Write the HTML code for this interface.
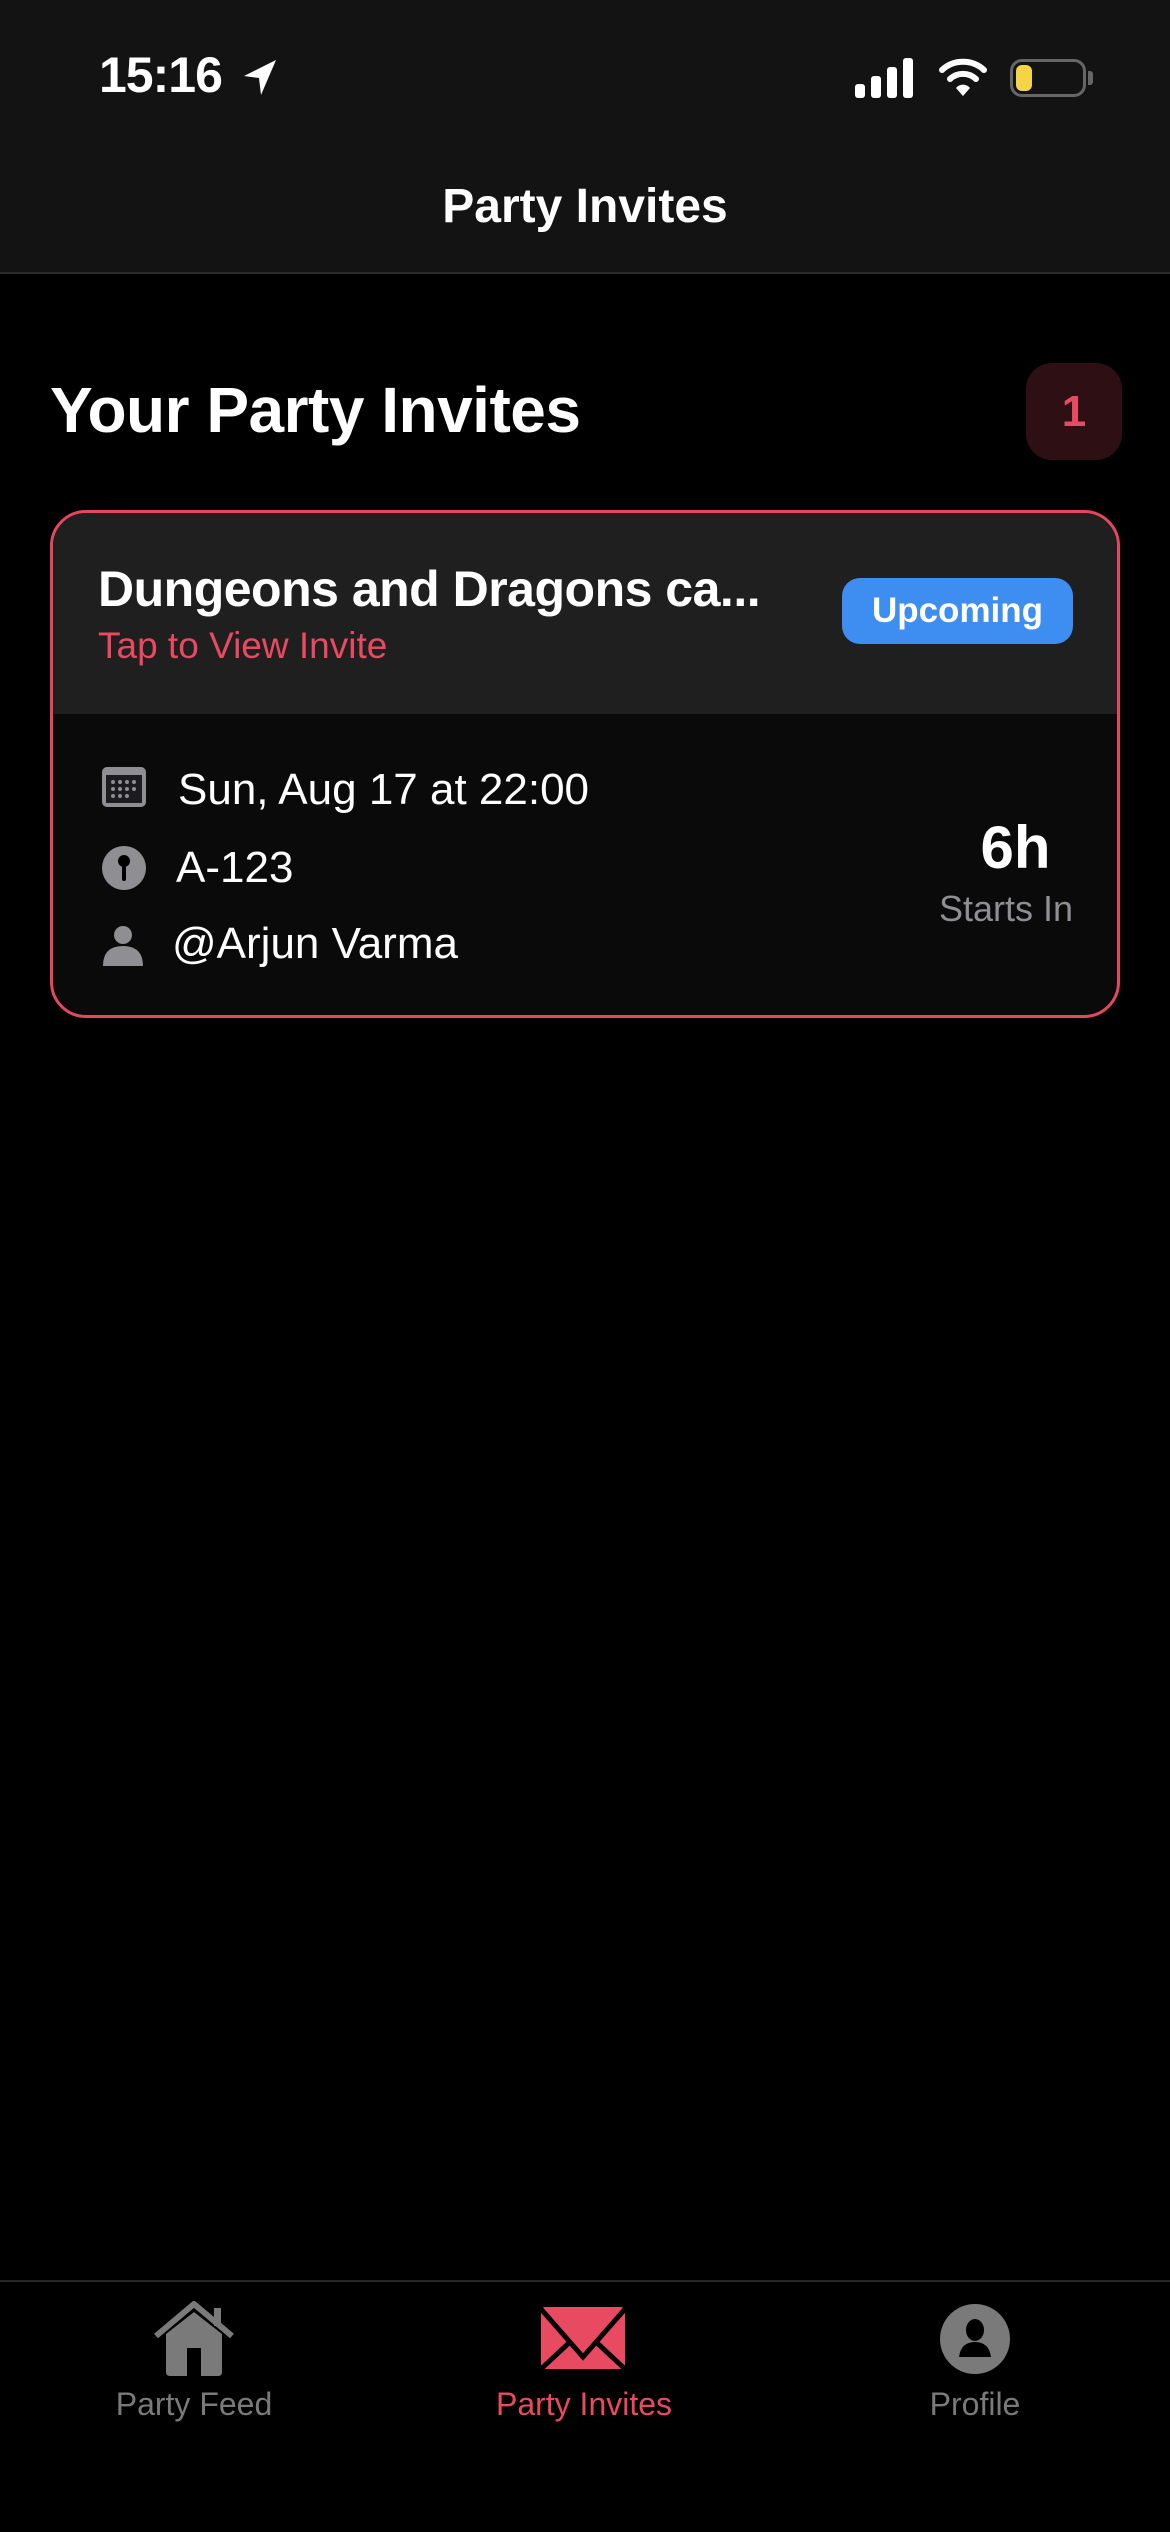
<!DOCTYPE html>
<html><head><meta charset="utf-8"><style>
*{margin:0;padding:0;box-sizing:border-box}
body{width:1170px;height:2532px;background:#000;font-family:"Liberation Sans",sans-serif;color:#fff;position:relative;overflow:hidden}
.abs{position:absolute}
</style></head><body>
<div class="abs" style="left:0;top:0;width:1170px;height:274px;background:#131313;border-bottom:2px solid #2a2a2a"></div>
<div class="abs" style="left:99px;top:46px;font-size:50px;font-weight:700;letter-spacing:-1px">15:16</div>
<svg class="abs" style="left:240px;top:58px" width="40" height="40" viewBox="0 0 40 40"><path d="M36 2 L4 18 L19 20 L21 37 Z" fill="#fff"/></svg>
<svg class="abs" style="left:855px;top:58px" width="60" height="40"><rect x="0" y="26" width="10" height="14" rx="3" fill="#fff"/><rect x="16" y="18" width="10" height="22" rx="3" fill="#fff"/><rect x="32" y="9" width="10" height="31" rx="3" fill="#fff"/><rect x="48" y="0" width="10" height="40" rx="3" fill="#fff"/></svg>
<svg class="abs" style="left:938px;top:56px" width="50" height="42" viewBox="0 0 50 42"><path d="M4 14 A31 31 0 0 1 46 14" stroke="#fff" stroke-width="6" fill="none" stroke-linecap="round"/><path d="M12 23 A19 19 0 0 1 38 23" stroke="#fff" stroke-width="6" fill="none" stroke-linecap="round"/><path d="M18 32 L25 40 L32 32 A9 9 0 0 0 18 32Z" fill="#fff"/></svg>
<div class="abs" style="left:1010px;top:59px;width:76px;height:38px;border:3px solid #666;border-radius:12px"></div>
<div class="abs" style="left:1016px;top:65px;width:16px;height:26px;background:#f5d547;border-radius:6px"></div>
<div class="abs" style="left:1088px;top:71px;width:5px;height:14px;background:#666;border-radius:0 3px 3px 0"></div>
<div class="abs" style="left:0;width:1170px;top:179px;text-align:center;font-size:48px;font-weight:600">Party Invites</div>

<div class="abs" style="left:50px;top:373px;font-size:64px;font-weight:700;letter-spacing:-0.5px">Your Party Invites</div>
<div class="abs" style="left:1026px;top:363px;width:96px;height:97px;background:#2e0f14;border-radius:26px;color:#e84a62;font-size:44px;font-weight:600;text-align:center;line-height:97px">1</div>

<div class="abs" style="left:50px;top:510px;width:1070px;height:508px;border:3px solid #e5475f;border-radius:36px;overflow:hidden;background:#0a0a0a">
 <div style="height:201px;background:#1f1f1f;position:relative">
  <div class="abs" style="left:45px;top:47px;font-size:50px;font-weight:700;letter-spacing:-0.5px">Dungeons and Dragons ca...</div>
  <div class="abs" style="left:45px;top:112px;font-size:37px;color:#e84a62">Tap to View Invite</div>
  <div class="abs" style="left:789px;top:65px;width:231px;height:66px;background:#3d8ef0;border-radius:18px;font-size:35px;font-weight:700;text-align:center;line-height:66px">Upcoming</div>
 </div>
 <svg class="abs" style="left:49px;top:254px" width="44" height="40"><rect x="0" y="0" width="44" height="40" rx="5" fill="#8e8e93"/><rect x="4" y="8" width="36" height="28" fill="#1c1c1e"/><g fill="#8e8e93"><circle cx="11" cy="15" r="2"/><circle cx="18" cy="15" r="2"/><circle cx="25" cy="15" r="2"/><circle cx="32" cy="15" r="2"/><circle cx="11" cy="22" r="2"/><circle cx="18" cy="22" r="2"/><circle cx="25" cy="22" r="2"/><circle cx="32" cy="22" r="2"/><circle cx="11" cy="29" r="2"/><circle cx="18" cy="29" r="2"/><circle cx="25" cy="29" r="2"/></g></svg>
 <div class="abs" style="left:125px;top:252px;font-size:44px">Sun, Aug 17 at 22:00</div>
 <svg class="abs" style="left:48px;top:332px" width="46" height="46"><circle cx="23" cy="23" r="22" fill="#8e8e93"/><circle cx="23" cy="16" r="6" fill="#000"/><rect x="21" y="18" width="4" height="18" rx="2" fill="#000"/></svg>
 <div class="abs" style="left:123px;top:330px;font-size:44px">A-123</div>
 <svg class="abs" style="left:50px;top:411px" width="40" height="42"><circle cx="20" cy="11" r="9" fill="#8e8e93"/><path d="M0 42 Q0 22 20 22 Q40 22 40 42Z" fill="#8e8e93"/></svg>
 <div class="abs" style="left:119px;top:406px;font-size:44px">@Arjun Varma</div>
 <div class="abs" style="left:850px;width:225px;top:300px;text-align:center;font-size:60px;font-weight:700">6h</div>
 <div class="abs" style="right:44px;top:375px;font-size:36px;color:#8e8e93">Starts In</div>
</div>

<div class="abs" style="left:0;top:2280px;width:1170px;height:2px;background:#262626"></div>
<svg class="abs" style="left:152px;top:2300px" width="84" height="76" viewBox="0 0 84 76"><path d="M4 36 L42 4 L80 36" stroke="#7a7a7a" stroke-width="6" fill="none" stroke-linejoin="round"/><rect x="62" y="8" width="7" height="18" fill="#7a7a7a"/><path d="M14 34 L42 12 L70 34 L70 72 Q70 76 66 76 L18 76 Q14 76 14 72Z" fill="#7a7a7a"/><rect x="35" y="48" width="14" height="28" fill="#000"/></svg>
<svg class="abs" style="left:541px;top:2307px" width="84" height="62" viewBox="0 0 84 62"><rect x="0" y="0" width="84" height="62" rx="4" fill="#e84a62"/><path d="M0 2 L42 50 L84 2" stroke="#000" stroke-width="5" fill="none"/><path d="M0 62 L30 34 M84 62 L54 34" stroke="#000" stroke-width="5"/></svg>
<svg class="abs" style="left:940px;top:2304px" width="70" height="70"><circle cx="35" cy="35" r="35" fill="#7a7a7a"/><ellipse cx="35" cy="26" rx="9" ry="11" fill="#000"/><path d="M19 53 Q21 38 35 38 Q49 38 51 53Z" fill="#000"/></svg>
<div class="abs" style="left:84px;width:220px;top:2386px;text-align:center;font-size:32px;color:#7a7a7a">Party Feed</div>
<div class="abs" style="left:454px;width:260px;top:2386px;text-align:center;font-size:32px;color:#e84a62">Party Invites</div>
<div class="abs" style="left:865px;width:220px;top:2386px;text-align:center;font-size:32px;color:#7a7a7a">Profile</div>
</body></html>
